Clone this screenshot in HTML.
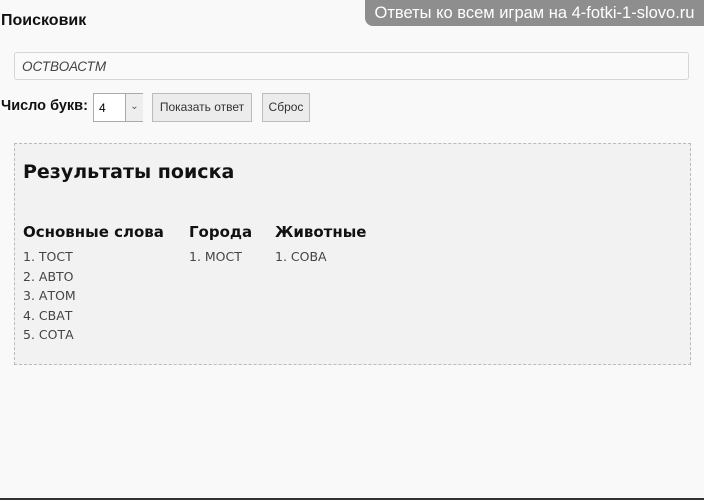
<!DOCTYPE html><html><head><style>
body{margin:0;width:704px;height:500px;background:#f9f9f9;font-family:"Liberation Sans",sans-serif;position:relative;overflow:hidden}
.a{position:absolute}
.ban{left:365px;top:0;width:339px;height:26px;background:#8e8e8e;border-bottom-left-radius:8px;color:#fff;font-size:16.5px;line-height:27px;text-align:center}
h1{position:absolute;left:1px;top:12px;margin:0;font-size:16px;font-weight:bold;color:#111}
.inp{left:14px;top:52px;height:28px;border:1px solid #d6d6d6;border-radius:3px;background:#fafafa;font-style:italic;font-size:13.5px;color:#444;line-height:28px;padding-left:7px;box-sizing:border-box;width:675px}
.lbl{left:1px;top:98px;font-size:14.5px;font-weight:bold;color:#111}
.sel{left:93px;top:93px;width:50px;height:29px;border:1px solid #aaa;background:#fff;box-sizing:border-box;font-size:12px}
.btn{top:93px;height:29px;border:1px solid #bbb;background:#ececec;box-sizing:border-box;font-size:12px;color:#333;line-height:27px;text-align:center}
.box{left:14px;top:143px;width:677px;height:222px;border:1px dashed #bbb;background:#f2f2f2;box-sizing:border-box}
.t{font-family:"DejaVu Sans",sans-serif;color:#111}
.it{font-family:"DejaVu Sans",sans-serif;font-size:12.5px;color:#444;line-height:19.5px}
</style></head><body>
<div class="a ban">Ответы ко всем играм на 4-fotki-1-slovo.ru</div>
<h1>Поисковик</h1>
<div class="a inp">ОСТВОАСТМ</div>
<div class="a lbl">Число букв:</div>
<div class="a sel"><span style="position:absolute;left:5px;top:7px">4</span><span style="position:absolute;left:31px;top:0;width:17px;height:27px;border-left:1px solid #aaa;background:#eee;text-align:center;line-height:26px;font-size:10px;color:#555">&#8964;</span></div>
<div class="a btn" style="left:152px;width:100px">Показать ответ</div>
<div class="a btn" style="left:262px;width:48px">Сброс</div>
<div class="a box">
<div class="a t" style="left:8px;top:17px;font-size:19px;font-weight:bold">Результаты поиска</div>
<div class="a t" style="left:8px;top:79px;font-size:15px;font-weight:bold">Основные слова</div>
<div class="a t" style="left:174px;top:79px;font-size:15px;font-weight:bold">Города</div>
<div class="a t" style="left:260px;top:79px;font-size:15px;font-weight:bold">Животные</div>
<div class="a it" style="left:8px;top:103px">1. ТОСТ<br>2. АВТО<br>3. АТОМ<br>4. СВАТ<br>5. СОТА</div>
<div class="a it" style="left:174px;top:103px">1. МОСТ</div>
<div class="a it" style="left:260px;top:103px">1. СОВА</div>
</div>
<div class="a" style="left:0;top:498px;width:704px;height:2px;background:#333"></div>
</body></html>
